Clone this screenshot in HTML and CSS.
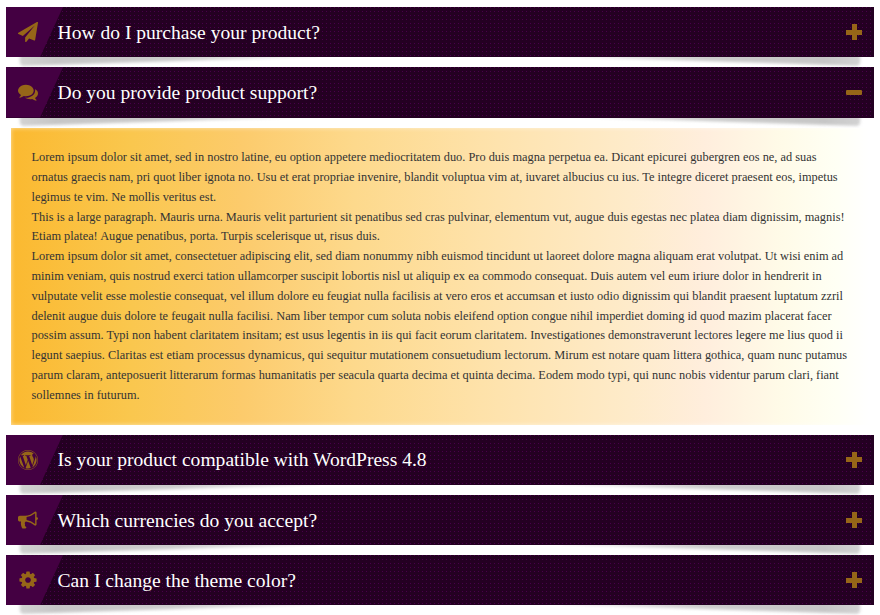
FILE: index.html
```html
<!DOCTYPE html>
<html lang="en">
<head>
<meta charset="utf-8">
<title>FAQ</title>
<link rel="stylesheet" href="styles.css">
</head>
<body>
<main class="accordion">
  <section class="item">
    <h2 class="header"><span class="tab"><svg class="icon" viewBox="0 0 1792 1792"><path d="M1764 11q33 24 27 64l-256 1536q-5 29-32 45-14 8-31 8-11 0-24-5l-453-185-242 295q-18 23-49 23-13 0-22-4-19-7-30.5-23.5t-11.5-36.5v-349l864-1059-1069 925-395-162q-37-14-40-55-2-40 32-59l1664-960q15-9 32-9 20 0 36 11z"/></svg></span><span class="title">How do I purchase your product?</span><span class="toggle"></span></h2>
  </section>
  <section class="item open">
    <h2 class="header"><span class="tab"><svg class="icon" viewBox="0 0 1792 1792"><path d="M1408 768q0 139-94 257t-256.5 186.5-353.5 68.5q-86 0-176-16-124 88-278 128-36 9-86 16h-3q-11 0-20.5-8t-11.5-21q-1-3-1-6.5t.5-6.5 2-6l2.5-5 3.5-5.5 4-5 4.5-5 4-4.5q5-6 23-25t26-29.5 22.5-29 25-38.5 20.5-44q-124-72-195-177t-71-224q0-139 94-257t256.5-186.5 353.5-68.5 353.5 68.5 256.5 186.5 94 257zm384 256q0 120-71 224.5t-195 176.5q10 24 20.5 44t25 38.5 22.5 29 26 29.5 23 25q1 1 4 4.5t4.5 5 4 5 3.5 5.5l2.5 5 2 6 .5 6.5-1 6.5q-3 14-13 22t-22 7q-50-7-86-16-154-40-278-128-90 16-176 16-271 0-472-132 58 4 88 4 161 0 309-45t264-129q125-92 192-212t67-254q0-77-23-152 129 71 204 178t75 230z"/></svg></span><span class="title">Do you provide product support?</span><span class="toggle"></span></h2>
    <div class="panel">
      <p>Lorem ipsum dolor sit amet, sed in nostro latine, eu option appetere mediocritatem duo. Pro duis magna perpetua ea. Dicant epicurei gubergren eos ne, ad suas<br>ornatus graecis nam, pri quot liber ignota no. Usu et erat propriae invenire, blandit voluptua vim at, iuvaret albucius cu ius. Te integre diceret praesent eos, impetus<br>legimus te vim. Ne mollis veritus est.</p>
      <p>This is a large paragraph. Mauris urna. Mauris velit parturient sit penatibus sed cras pulvinar, elementum vut, augue duis egestas nec platea diam dignissim, magnis!<br>Etiam platea! Augue penatibus, porta. Turpis scelerisque ut, risus duis.</p>
      <p>Lorem ipsum dolor sit amet, consectetuer adipiscing elit, sed diam nonummy nibh euismod tincidunt ut laoreet dolore magna aliquam erat volutpat. Ut wisi enim ad<br>minim veniam, quis nostrud exerci tation ullamcorper suscipit lobortis nisl ut aliquip ex ea commodo consequat. Duis autem vel eum iriure dolor in hendrerit in<br>vulputate velit esse molestie consequat, vel illum dolore eu feugiat nulla facilisis at vero eros et accumsan et iusto odio dignissim qui blandit praesent luptatum zzril<br>delenit augue duis dolore te feugait nulla facilisi. Nam liber tempor cum soluta nobis eleifend option congue nihil imperdiet doming id quod mazim placerat facer<br>possim assum. Typi non habent claritatem insitam; est usus legentis in iis qui facit eorum claritatem. Investigationes demonstraverunt lectores legere me lius quod ii<br>legunt saepius. Claritas est etiam processus dynamicus, qui sequitur mutationem consuetudium lectorum. Mirum est notare quam littera gothica, quam nunc putamus<br>parum claram, anteposuerit litterarum formas humanitatis per seacula quarta decima et quinta decima. Eodem modo typi, qui nunc nobis videntur parum clari, fiant<br>sollemnes in futurum.</p>
    </div>
  </section>
  <section class="item">
    <h2 class="header"><span class="tab"><svg class="icon" viewBox="0 0 1792 1792"><path d="M127 896q0-163 67-313l367 1005q-196-95-315-281t-119-411zm1288-39q0 19-2.5 38.5t-10 49.5-11.5 44-17.5 59-17.5 58l-76 256-278-826q46-3 88-8 19-2 26-18.5t-2.5-31-28.5-13.5l-205 10q-75-1-202-10-12-1-20.5 5t-11.5 15-1.5 18.5 9 16.5 19.5 8l80 8 120 328-168 504-280-832q46-3 88-8 19-2 26-18.5t-2.5-31-28.5-13.5l-205 10q-7 0-23-.5t-26-.5q105-160 274.5-253.5t367.5-93.5q147 0 280.5 53t238.5 149h-10q-55 0-92 40.5t-37 95.5q0 12 2 24t4 21.5 8 23 9 21 12 22.5 12.5 21 14.5 24 14 23q63 107 63 212zm-506 106l237 647q1 6 5 11-126 44-255 44-112 0-217-32zm661-436q95 174 95 369 0 209-104 385.5t-279 278.5l235-678q59-169 59-276 0-42-6-79zm-674-527q182 0 348 71t286 191 191 286 71 348-71 348-191 286-286 191-348 71-348-71-286-191-191-286-71-348 71-348 191-286 286-191 348-71zm0 1751q173 0 331.5-68t273-182.5 182.5-273 68-331.5-68-331.5-182.5-273-273-182.5-331.5-68-331.5 68-273 182.5-182.5 273-68 331.5 68 331.5 182.5 273 273 182.5 331.5 68z"/></svg></span><span class="title">Is your product compatible with WordPress 4.8</span><span class="toggle"></span></h2>
  </section>
  <section class="item">
    <h2 class="header"><span class="tab"><svg class="icon" viewBox="0 0 1792 1792"><path d="M1664 640q53 0 90.5 37.5t37.5 90.5-37.5 90.5-90.5 37.5v384q0 52-38 90t-90 38q-417-347-812-380-58 19-91 66t-31 100.5 40 92.5q-20 33-23 65.5t6 58 33.5 55 48 50 61.5 50.5q-29 58-111.5 83t-168.5 11.5-132-55.5q-7-23-29.5-87.5t-32-94.5-23-89-15-101 3.5-98.5 22-110.5h-122q-66 0-113-47t-47-113v-192q0-66 47-113t113-47h480q435 0 896-384 52 0 90 38t38 90v384zm-128 604v-954q-394 302-768 343v270q377 42 768 341z"/></svg></span><span class="title">Which currencies do you accept?</span><span class="toggle"></span></h2>
  </section>
  <section class="item">
    <h2 class="header"><span class="tab"><svg class="icon" viewBox="0 0 1792 1792"><path d="M1152 896q0-106-75-181t-181-75-181 75-75 181 75 181 181 75 181-75 75-181zm512-109v222q0 12-8 23t-20 13l-185 28q-19 54-39 91 35 50 107 138 10 12 10 25t-9 23q-27 37-99 108t-94 71q-12 0-26-9l-138-108q-44 23-91 38-16 136-29 186-7 28-36 28h-222q-14 0-24.5-8.5t-11.5-21.5l-28-184q-49-16-90-37l-141 107q-10 9-25 9-14 0-25-11-126-114-165-168-7-10-7-23 0-12 8-23 15-21 51-66.5t54-70.5q-27-50-41-99l-183-27q-13-2-21-12.5t-8-23.5v-222q0-12 8-23t19-13l186-28q14-46 39-92-40-57-107-138-10-12-10-24 0-10 9-23 26-36 98.5-107.5t94.5-71.5q13 0 26 10l138 107q44-23 91-38 16-136 29-186 7-28 36-28h222q14 0 24.5 8.5t11.5 21.5l28 184q49 16 90 37l142-107q9-9 24-9 13 0 25 10 129 119 165 170 7 8 7 22 0 12-8 23-15 21-51 66.5t-54 70.5q26 50 41 98l183 28q13 2 21 12.5t8 23.5z"/></svg></span><span class="title">Can I change the theme color?</span><span class="toggle"></span></h2>
  </section>
</main>
</body>
</html>
```
FILE: styles.css
```css
* { box-sizing: border-box; }

body {
  margin: 0;
  height: 615px;
  overflow: hidden;
  background: #fff;
  font-family: "Liberation Serif", "Times New Roman", serif;
}

.accordion {
  display: flex;
  flex-direction: column;
  gap: 10px;
  padding: 7px 6.5px 0 6px;
  position: relative;
  z-index: 0;
}

.item { position: relative; }

.header {
  display: flex;
  align-items: center;
  position: relative;
  height: 50.3px;
  margin: 0;
  color: #fff;
  font-size: 19.57px;
  font-weight: 400;
  background:
    conic-gradient(at 1px 1px, transparent 75%, #48004a 0) 0 0 / 4px 4px,
    #240022;
}

/* Lifted-corner shadows below each header */
.header::before,
.header::after {
  content: "";
  position: absolute;
  z-index: -1;
  top: 47px;
  width: 300px;
  height: 12px;
  border-radius: 4px;
  filter: blur(1.5px);
}
.header::before {
  left: 14px;
  background: linear-gradient(90deg, #d2d2d2, #c6c6c6 12%, #cbcbcb 50%, #eee);
  transform: rotate(-1.8deg);
  transform-origin: 0 100%;
}
.header::after {
  right: 14px;
  background: linear-gradient(270deg, #d2d2d2, #c6c6c6 12%, #cbcbcb 50%, #eee);
  transform: rotate(1.8deg);
  transform-origin: 100% 100%;
}

.tab {
  align-self: stretch;
  display: flex;
  align-items: center;
  width: 57px;
  padding-left: 12px;
  background: #440042;
  clip-path: polygon(0 0, 100% 0, 34px 100%, 0 100%);
}

.icon {
  width: 20px;
  height: 20px;
  fill: #966618;
}

.title {
  flex: 1;
  margin: 1px 0 0 -5.5px;
  white-space: nowrap;
}

.toggle {
  width: 16px;
  height: 16px;
  margin-right: 11.5px;
  background:
    linear-gradient(#966618, #966618) center / 16px 5px no-repeat,
    linear-gradient(#966618, #966618) center / 5px 16px no-repeat;
}
.open .toggle {
  height: 5px;
  border-radius: 1px;
}

.panel {
  position: relative;
  height: 297px;
  margin: 10px 5px 0;
  padding: 20.6px 0 0 20.5px;
  color: #333;
  font-size: 12.36px;
  line-height: 19.8px;
  white-space: nowrap;
  background: linear-gradient(90deg, #fbb930 0, #fac74e 14%, #fccb6c 27%, #fdd98c 40%, #fee2aa 55%, #feebca 72%, #ffeedd 81%, #fffbe8 90%, #fffff4 96%, #fff 100%);
  box-shadow: inset 0 0 4px rgba(255, 255, 255, 0.6);
}
.panel p { margin: 0; }
```
